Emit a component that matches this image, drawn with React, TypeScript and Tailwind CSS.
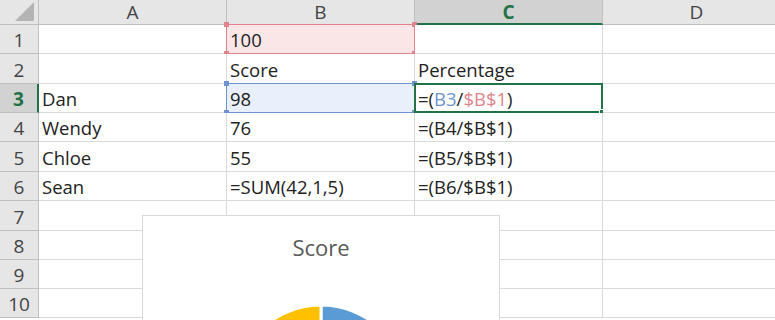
import React from 'react'

const font = { fontFamily: '"Open Sans", "Liberation Sans", sans-serif' }

const cols = ['A', 'B', 'C', 'D']
const rowHeights = [29, 30, 29, 29, 30, 29, 30, 29, 29, 29]

type Mark = 'red' | 'blue' | 'active' | undefined

const data: Record<string, React.ReactNode> = {
  B1: '100',
  B2: 'Score',
  C2: 'Percentage',
  A3: 'Dan',
  B3: '98',
  C3: (
    <>
      =(<span className="text-[#6f93cf]">B3</span>/<span className="text-[#e0838a]">$B$1</span>)
    </>
  ),
  A4: 'Wendy',
  B4: '76',
  C4: '=(B4/$B$1)',
  A5: 'Chloe',
  B5: '55',
  C5: '=(B5/$B$1)',
  A6: 'Sean',
  B6: '=SUM(42,1,5)',
  C6: '=(B6/$B$1)',
}

const marks: Record<string, Mark> = { B1: 'red', B3: 'blue', C3: 'active' }

function Handle({ pos, color }: { pos: string; color: string }) {
  return <span className={`absolute w-[5px] h-[5px] ${pos} ${color}`} />
}

function Cell({ id, h }: { id: string; h: number }) {
  const mark = marks[id]
  const bg = mark === 'red' ? 'bg-[#fbe6e7]' : mark === 'blue' ? 'bg-[#e9f0fb]' : 'bg-white'
  return (
    <div
      className={`relative flex items-center pl-[3px] pt-[2px] border-r border-b border-[#dadada] text-[18.5px] leading-[24px] text-[#222] whitespace-nowrap ${bg}`}
      style={{ height: h }}
    >
      {data[id]}
      {mark === 'red' && (
        <>
          <span className="absolute -left-px -top-px -right-px -bottom-px border border-[#e0838a]" />
          <Handle pos="-left-[3px] -top-[3px]" color="bg-[#e0838a]" />
          <Handle pos="-right-[3px] -top-[3px]" color="bg-[#e0838a]" />
          <Handle pos="-left-[3px] -bottom-[3px]" color="bg-[#e0838a]" />
          <Handle pos="-right-[3px] -bottom-[3px]" color="bg-[#e0838a]" />
        </>
      )}
      {mark === 'blue' && (
        <>
          <span className="absolute -left-px -top-px -right-px -bottom-px border border-[#6f93cf]" />
          <Handle pos="-left-[3px] -top-[3px]" color="bg-[#6f93cf]" />
          <Handle pos="-right-[3px] -top-[3px]" color="bg-[#6f93cf]" />
          <Handle pos="-left-[3px] -bottom-[3px]" color="bg-[#6f93cf]" />
          <Handle pos="-right-[3px] -bottom-[3px]" color="bg-[#6f93cf]" />
        </>
      )}
      {mark === 'active' && (
        <>
          <span className="absolute -left-px -top-px -right-px -bottom-px border-2 border-[#217346]" />
          <span className="absolute -right-[4px] -bottom-[4px] w-[7px] h-[7px] bg-[#217346] border border-white" />
        </>
      )}
    </div>
  )
}

function Chart() {
  const cx = 178
  const cy = 175
  const r = 86
  return (
    <div className="absolute left-[142px] top-[215px] w-[358px] h-[200px] bg-white border border-[#d9d9d9]">
      <div className="pt-[15px] text-center text-[22px] text-[#595959]">Score</div>
      <svg className="absolute left-0 top-0" width="358" height="200">
        <path d={`M${cx} ${cy} L${cx} ${cy - r} A${r} ${r} 0 0 1 ${cx + r} ${cy} Z`} fill="#5b9bd5" stroke="white" strokeWidth="3" />
        <path d={`M${cx} ${cy} L${cx - r} ${cy} A${r} ${r} 0 0 1 ${cx} ${cy - r} Z`} fill="#ffc000" stroke="white" strokeWidth="3" />
      </svg>
    </div>
  )
}

export default function App() {
  return (
    <div className="relative w-[775px] h-[320px] overflow-hidden bg-white" style={font}>
      <div className="grid grid-cols-[39px_188px_188px_188px_188px] w-[791px]">
        {/* header row */}
        <div className="relative h-[25px] bg-[#e6e6e6] border-r border-b border-[#bfbfbf]">
          <svg className="absolute right-[4px] bottom-[3px]" width="19" height="19">
            <polygon points="19,0 19,19 0,19" fill="#b4b4b4" />
          </svg>
        </div>
        {cols.map((c) =>
          c === 'C' ? (
            <div key={c} className="h-[25px] flex items-center justify-center bg-[#d2d2d2] border-r border-[#bfbfbf] border-b-2 border-b-[#217346] text-[19px] leading-[20px] font-bold text-[#217346]">
              {c}
            </div>
          ) : (
            <div key={c} className="h-[25px] flex items-center justify-center bg-[#e6e6e6] border-r border-b border-[#bfbfbf] text-[19px] leading-[20px] text-[#444]">
              {c}
            </div>
          )
        )}
        {rowHeights.map((h, i) => {
          const r = i + 1
          return (
            <React.Fragment key={r}>
              {r === 3 ? (
                <div className="flex items-center justify-center pt-[2px] bg-[#d2d2d2] border-r-2 border-r-[#217346] border-b border-[#bfbfbf] text-[19px] leading-[24px] font-bold text-[#217346]" style={{ height: h }}>
                  {r}
                </div>
              ) : (
                <div className="flex items-center justify-center pt-[2px] bg-[#e6e6e6] border-r border-b border-[#bfbfbf] text-[19px] leading-[24px] text-[#444]" style={{ height: h }}>
                  {r}
                </div>
              )}
              {cols.map((c) => (
                <Cell key={c + r} id={c + r} h={h} />
              ))}
            </React.Fragment>
          )
        })}
      </div>
      <Chart />
    </div>
  )
}
